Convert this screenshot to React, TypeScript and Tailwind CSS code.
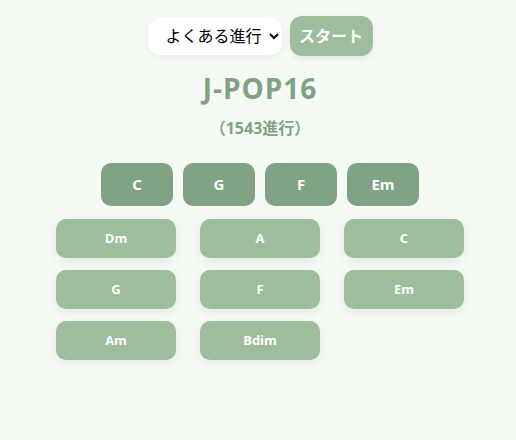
import { useState } from "react";

// ---------------------------------------------------------------------------
// Data
// ---------------------------------------------------------------------------

const PROGRESSION = ["C", "G", "F", "Em"];
const CHORDS = ["Dm", "A", "C", "G", "F", "Em", "Am", "Bdim"];

const FONT = "font-['Open_Sans','Noto_Sans_CJK_JP',sans-serif]";

// ---------------------------------------------------------------------------
// Component
// ---------------------------------------------------------------------------

export default function App() {
  const [preset, setPreset] = useState("common");

  return (
    <div className={`min-h-screen w-full bg-[#f5faf4] ${FONT}`}>
      <div className="flex flex-col items-center pt-4 pl-1">
        {/* Controls */}
        <div className="flex items-center gap-2">
          <select
            value={preset}
            onChange={(e) => setPreset(e.target.value)}
            className="h-[37px] w-[134px] rounded-xl bg-white pl-[14px] pr-1 text-base text-black shadow-[0_2px_6px_rgba(0,0,0,0.06)] outline-none"
          >
            <option value="common">よくある進行</option>
            <option value="custom">カスタム</option>
          </select>
          <button
            type="button"
            className="h-10 w-[83px] rounded-xl bg-[#9dbd9d] text-base font-bold text-white shadow-[0_2px_6px_rgba(0,0,0,0.08)]"
          >
            スタート
          </button>
        </div>

        {/* Title */}
        <h1 className="mt-[14px] text-[28px] leading-[36px] font-bold tracking-[1px] text-[#7fa283]">
          J-POP16
        </h1>
        <p className="mt-[12px] text-base leading-5 font-bold text-[#7fa283]">（1543進行）</p>

        {/* Current progression */}
        <div className="mt-[25px] flex gap-[10px]">
          {PROGRESSION.map((c, i) => (
            <div
              key={i}
              className="flex h-[43px] w-[72px] items-center justify-center rounded-[10px] bg-[#80a384] text-[15px] font-bold text-white"
            >
              {c}
            </div>
          ))}
        </div>

        {/* Chord palette */}
        <div className="mt-[13px] grid grid-cols-[120px_120px_120px] gap-x-6 gap-y-3">
          {CHORDS.map((c, i) => (
            <button
              key={i}
              type="button"
              className="flex h-[39px] items-center justify-center rounded-[10px] bg-[#9dbd9d] text-[13px] font-bold text-white shadow-[0_3px_8px_rgba(0,0,0,0.08)]"
            >
              {c}
            </button>
          ))}
        </div>
      </div>
    </div>
  );
}
